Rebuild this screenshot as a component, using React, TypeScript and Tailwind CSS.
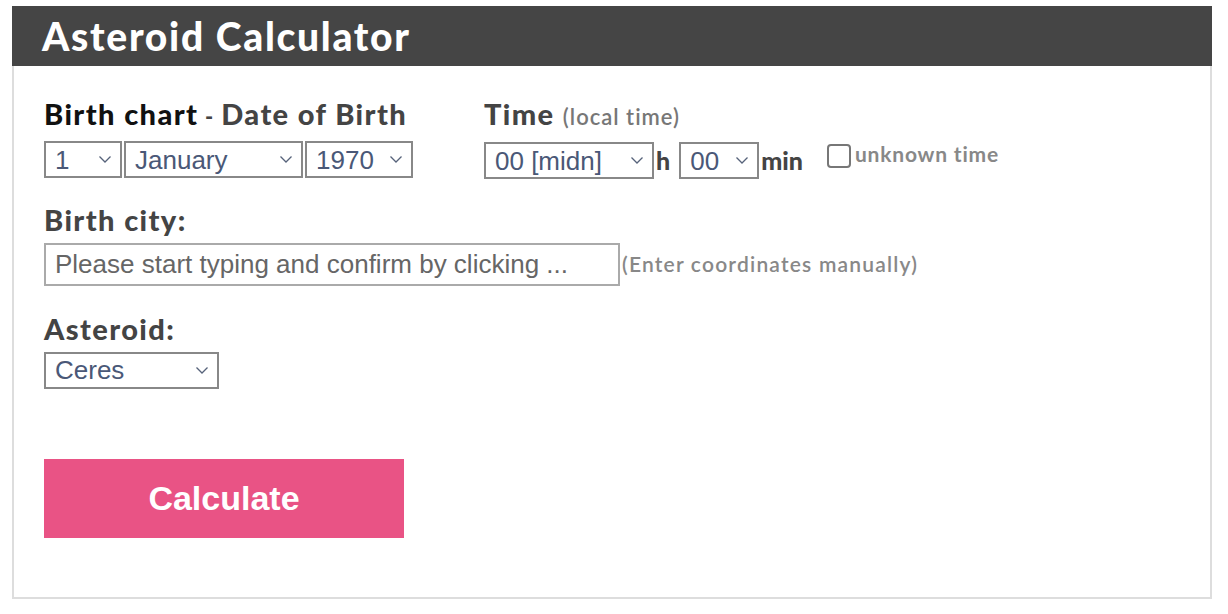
import { ReactNode } from "react";

const futura = { fontFamily: "Lato, 'Noto Sans', sans-serif" };
const arial = { fontFamily: "'Liberation Sans', Arial, sans-serif" };

function Chevron() {
  return (
    <svg width="14" height="9" viewBox="0 0 14 9" fill="none" className="shrink-0">
      <path d="M1.5 1.5 L7 7 L12.5 1.5" stroke="#56627a" strokeWidth="1.3" />
    </svg>
  );
}

// fake select box, drawn so the chevron matches the macOS look
function FakeSelect({
  value,
  className,
}: {
  value: string;
  className: string;
}) {
  return (
    <div
      style={arial}
      className={`flex items-center justify-between border-2 border-[#888] bg-white pl-[9px] pr-[8px] text-[26px] leading-none text-[#4a5877] ${className}`}
    >
      <span>{value}</span>
      <Chevron />
    </div>
  );
}

function Label({ children }: { children: ReactNode }) {
  return (
    <div
      style={futura}
      className="text-[29px] font-black leading-[36px] tracking-[1.4px] text-[#444]"
    >
      {children}
    </div>
  );
}

export default function App() {
  return (
    <div className="min-h-screen bg-white pt-[6px] pl-[12px]">
      <div className="w-[1200px]">
        {/* Header */}
        <div className="flex h-[60px] items-center bg-[#454545] px-[30px]">
          <h1
            style={futura}
            className="text-[39px] font-black leading-none tracking-[1.7px] text-white"
          >
            Asteroid Calculator
          </h1>
        </div>

        {/* Body */}
        <div className="h-[533px] border-2 border-t-0 border-[#ddd] px-[30px] pt-[30px]">
          {/* Date + time row */}
          <div className="flex">
            <div className="w-[440px]">
              <Label>
                <span className="text-[#111]">Birth chart</span>
                <span className="text-[22px]"> - </span>
                Date of Birth
              </Label>
              <div className="mt-[6px] flex gap-[2px]">
                <FakeSelect value="1" className="h-[37px] w-[78px]" />
                <FakeSelect value="January" className="h-[37px] w-[179px]" />
                <FakeSelect value="1970" className="h-[37px] w-[108px]" />
              </div>
            </div>

            <div>
              <Label>
                Time{" "}
                <span className="text-[22px] font-semibold tracking-[1px] text-[#777]">
                  (local time)
                </span>
              </Label>
              <div className="mt-[7px] flex items-center">
                <FakeSelect value="00 [midn]" className="h-[37px] w-[170px]" />
                <span style={futura} className="ml-[2px] text-[25px] font-black text-[#444]">
                  h
                </span>
                <FakeSelect value="00" className="ml-[9px] h-[37px] w-[80px]" />
                <span style={futura} className="ml-[2px] text-[25px] font-black text-[#444]">
                  min
                </span>
                <div className="ml-[24px] flex items-start self-start pt-[1px]">
                  <div className="mt-[1px] h-[24px] w-[24px] rounded-[4px] border-2 border-[#777] bg-white" />
                  <span
                    style={futura}
                    className="ml-[4px] text-[21px] font-bold leading-[22px] tracking-[0.8px] text-[#888]"
                  >
                    unknown time
                  </span>
                </div>
              </div>
            </div>
          </div>

          {/* Birth city */}
          <div className="mt-[22px]">
            <Label>Birth city:</Label>
            <div className="mt-[5px] flex items-center">
              <div
                style={arial}
                className="flex h-[43px] w-[576px] items-center border-2 border-[#aaa] px-[9px] text-[26px] text-[#666]"
              >
                Please start typing and confirm by clicking ...
              </div>
              <span
                style={futura}
                className="ml-[2px] text-[21px] font-semibold tracking-[1.2px] text-[#888]"
              >
                (Enter coordinates manually)
              </span>
            </div>
          </div>

          {/* Asteroid */}
          <div className="mt-[25px]">
            <Label>Asteroid:</Label>
            <FakeSelect value="Ceres" className="mt-[5px] h-[37px] w-[175px]" />
          </div>

          <button
            style={arial}
            className="mt-[70px] flex h-[79px] w-[360px] items-center justify-center bg-[#e95385] text-[34px] font-bold text-white"
          >
            Calculate
          </button>
        </div>
      </div>
    </div>
  );
}
